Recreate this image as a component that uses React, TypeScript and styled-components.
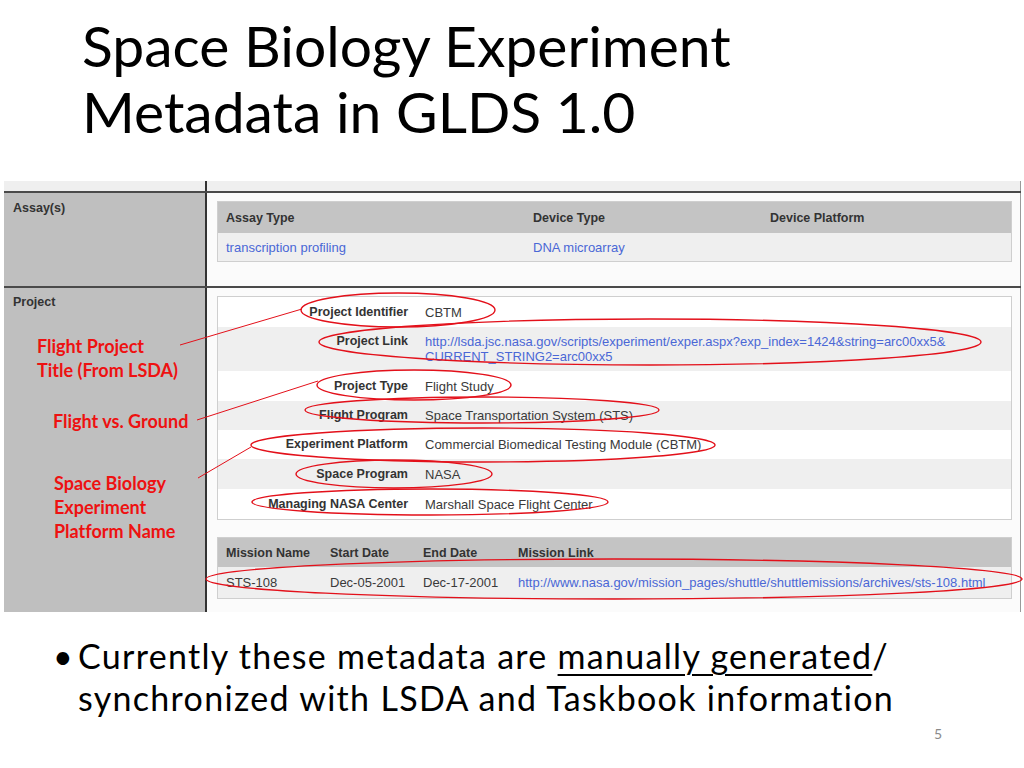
import React from "react";
import styled, { createGlobalStyle } from "styled-components";

const GlobalStyle = createGlobalStyle`
  html, body {
    margin: 0;
    padding: 0;
    background: #ffffff;
  }
  body {
    width: 1024px;
    height: 768px;
    overflow: hidden;
  }
`;

const Slide = styled.div`
  position: relative;
  width: 1024px;
  height: 768px;
  display: flex;
  flex-direction: column;
  font-family: Lato, "Open Sans", sans-serif;
  font-variant-ligatures: none;
  color: #000;
`;

const Title = styled.h1`
  margin: 0;
  padding: 12px 0 0 82px;
  height: 181px;
  flex: none;
  box-sizing: border-box;
  font-family: Lato, sans-serif;
  font-weight: 400;
  font-size: 57px;
  line-height: 66px;
  color: #000;
`;

const Shot = styled.div`
  margin-left: 4px;
  width: 1017px;
  height: 431px;
  flex: none;
  display: flex;
  flex-direction: column;
  font-family: "Liberation Sans", Arial, sans-serif;
  color: #333;
`;

const Row = styled.div<{ $h?: number; $line?: boolean }>`
  display: grid;
  grid-template-columns: 203px 1fr;
  height: ${(p) => (p.$h ? `${p.$h}px` : "auto")};
  flex: ${(p) => (p.$h ? "none" : "1")};
  border-bottom: ${(p) => (p.$line ? "2px solid #4a4a4a" : "none")};
`;

const Side = styled.div<{ $bg?: string; $pt?: number }>`
  background: ${(p) => p.$bg || "#bfbfbf"};
  border-right: 2px solid #333;
  padding: ${(p) => p.$pt ?? 0}px 0 0 9px;
  display: flex;
  flex-direction: column;
  overflow: hidden;
`;

const SideLabel = styled.div`
  font-size: 12.5px;
  font-weight: 700;
  line-height: 15px;
  color: #333;
`;

const Note = styled.div<{ $indent: number; $top: number }>`
  margin: ${(p) => p.$top}px 0 0 ${(p) => p.$indent}px;
  font-family: Lato, sans-serif;
  font-weight: 700;
  font-size: 18px;
  line-height: 24px;
  color: #ee1111;
  white-space: nowrap;
`;

const Main = styled.div<{ $bg?: string }>`
  background: ${(p) => p.$bg || "#fbfbfb"};
  border-right: 1px solid #9a9a9a;
  padding: 8px 8px 0 10px;
  display: flex;
  flex-direction: column;
`;

const Table = styled.div<{ $bg?: string }>`
  border: 1px solid #cfcfcf;
  background: ${(p) => p.$bg || "#ffffff"};
  display: flex;
  flex-direction: column;
`;

const TRow = styled.div<{ $cols: string; $bg: string; $h: number; $head?: boolean }>`
  display: grid;
  grid-template-columns: ${(p) => p.$cols};
  align-items: center;
  height: ${(p) => p.$h}px;
  padding-left: 8px;
  background: ${(p) => p.$bg};
  font-size: ${(p) => (p.$head ? "12.5px" : "13px")};
  font-weight: ${(p) => (p.$head ? 700 : 400)};
  color: ${(p) => (p.$head ? "#333" : "#3a3a3a")};
  white-space: nowrap;
`;

const Link = styled.span`
  color: #4a67d6;
`;

const KvRow = styled.div<{ $bg: string; $h: number }>`
  display: grid;
  grid-template-columns: 190px 1fr;
  column-gap: 17px;
  align-items: center;
  height: ${(p) => p.$h}px;
  background: ${(p) => p.$bg};
  white-space: nowrap;
`;

const KvLabel = styled.div<{ $top?: boolean }>`
  align-self: ${(p) => (p.$top ? "start" : "center")};
  margin-top: ${(p) => (p.$top ? "7px" : "0")};
  text-align: right;
  font-size: 12.5px;
  line-height: 15px;
  font-weight: 700;
  color: #333;
`;

const KvValue = styled.div`
  font-size: 13px;
  line-height: 15px;
  color: #3a3a3a;
`;

const Gap = styled.div<{ $h: number }>`
  height: ${(p) => p.$h}px;
  flex: none;
`;

const Bullets = styled.ul`
  margin: 23px 0 0 0;
  padding: 0 0 0 53px;
  list-style: none;
  font-family: Lato, sans-serif;
  font-size: 34px;
  line-height: 42px;
  letter-spacing: 1.3px;
  color: #000;
`;

const Bullet = styled.li`
  position: relative;
  padding-left: 25px;
  &::before {
    content: "•";
    position: absolute;
    left: 0;
    top: 0;
  }
`;

const Under = styled.span`
  text-decoration: underline;
  text-decoration-thickness: 2px;
  text-underline-offset: 5px;
`;

const PageNo = styled.div`
  margin-top: 6px;
  padding-right: 82px;
  text-align: right;
  font-family: Lato, sans-serif;
  font-size: 14px;
  line-height: 17px;
  color: #8a8a8a;
`;

const Overlay = styled.svg`
  position: absolute;
  left: 0;
  top: 0;
  width: 1024px;
  height: 768px;
  pointer-events: none;
`;

const kvRows: { label: string; value: React.ReactNode; h: number; top?: boolean }[] = [
  { label: "Project Identifier", value: "CBTM", h: 30 },
  {
    label: "Project Link",
    value: (
      <Link>
        http://lsda.jsc.nasa.gov/scripts/experiment/exper.aspx?exp_index=1424&amp;string=arc00xx5&amp;
        <br />
        CURRENT_STRING2=arc00xx5
      </Link>
    ),
    h: 44,
    top: true,
  },
  { label: "Project Type", value: "Flight Study", h: 30 },
  { label: "Flight Program", value: "Space Transportation System (STS)", h: 29 },
  { label: "Experiment Platform", value: "Commercial Biomedical Testing Module (CBTM)", h: 29 },
  { label: "Space Program", value: "NASA", h: 30 },
  { label: "Managing NASA Center", value: "Marshall Space Flight Center", h: 30 },
];

const ellipses = [
  { cx: 398, cy: 310, rx: 97, ry: 17 },
  { cx: 650, cy: 342, rx: 331, ry: 23 },
  { cx: 414, cy: 385, rx: 97, ry: 15 },
  { cx: 482, cy: 410, rx: 177, ry: 13 },
  { cx: 483, cy: 445, rx: 232, ry: 17 },
  { cx: 394, cy: 474, rx: 98, ry: 14 },
  { cx: 430, cy: 502, rx: 178, ry: 13 },
  { cx: 614, cy: 579, rx: 408, ry: 20 },
];

const App: React.FC = () => {
  return (
    <Slide>
      <GlobalStyle />
      <Title>
        Space Biology Experiment
        <br />
        Metadata in GLDS 1.0
      </Title>

      <Shot>
        <Row $h={10} $line>
          <Side $bg="#efefef" />
          <Main $bg="#efefef" />
        </Row>

        <Row $h={93} $line>
          <Side $pt={8}>
            <SideLabel>Assay(s)</SideLabel>
          </Side>
          <Main>
            <Table>
              <TRow $cols="307px 237px 1fr" $bg="#c4c4c4" $h={31} $head>
                <span>Assay Type</span>
                <span>Device Type</span>
                <span>Device Platform</span>
              </TRow>
              <TRow $cols="307px 237px 1fr" $bg="#efefef" $h={28}>
                <Link>transcription profiling</Link>
                <Link>DNA microarray</Link>
                <span />
              </TRow>
            </Table>
          </Main>
        </Row>

        <Row>
          <Side $pt={7}>
            <SideLabel>Project</SideLabel>
            <Note $indent={24} $top={24}>
              Flight Project
              <br />
              Title (From LSDA)
            </Note>
            <Note $indent={40} $top={27}>
              Flight vs. Ground
            </Note>
            <Note $indent={41} $top={38}>
              Space Biology
              <br />
              Experiment
              <br />
              Platform Name
            </Note>
          </Side>
          <Main>
            <Table>
              {kvRows.map((r, i) => (
                <KvRow key={r.label} $bg={i % 2 ? "#efefef" : "#ffffff"} $h={r.h}>
                  <KvLabel $top={r.top}>{r.label}</KvLabel>
                  <KvValue>{r.value}</KvValue>
                </KvRow>
              ))}
            </Table>
            <Gap $h={17} />
            <Table>
              <TRow $cols="104px 93px 95px 1fr" $bg="#c4c4c4" $h={29} $head>
                <span>Mission Name</span>
                <span>Start Date</span>
                <span>End Date</span>
                <span>Mission Link</span>
              </TRow>
              <TRow $cols="104px 93px 95px 1fr" $bg="#efefef" $h={31}>
                <span>STS-108</span>
                <span>Dec-05-2001</span>
                <span>Dec-17-2001</span>
                <Link>http://www.nasa.gov/mission_pages/shuttle/shuttlemissions/archives/sts-108.html</Link>
              </TRow>
            </Table>
          </Main>
        </Row>
      </Shot>

      <Bullets>
        <Bullet>
          Currently these metadata are <Under>manually generated</Under>/
          <br />
          synchronized with LSDA and Taskbook information
        </Bullet>
      </Bullets>
      <PageNo>5</PageNo>

      <Overlay viewBox="0 0 1024 768">
        <g fill="none" stroke="#e3101a" strokeWidth={1.4}>
          {ellipses.map((e, i) => (
            <ellipse key={i} cx={e.cx} cy={e.cy} rx={e.rx} ry={e.ry} />
          ))}
          <line x1={180} y1={345} x2={302} y2={309} strokeWidth={1} />
          <line x1={197} y1={420} x2={318} y2={381} strokeWidth={1} />
          <line x1={198} y1={478} x2={251} y2={447} strokeWidth={1} />
        </g>
      </Overlay>
    </Slide>
  );
};

export default App;
